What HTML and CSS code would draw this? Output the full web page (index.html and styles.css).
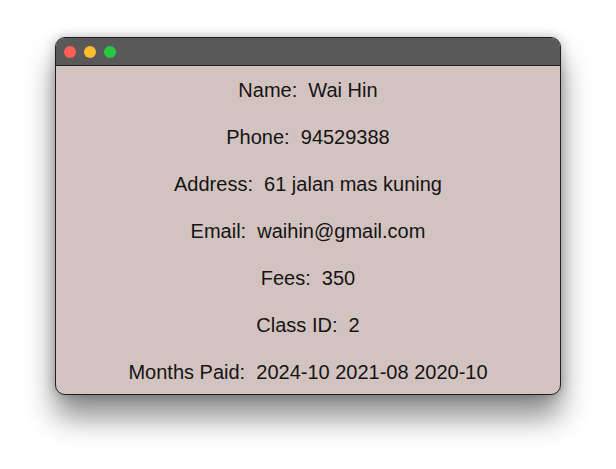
FILE: index.html
```html
<!DOCTYPE html>
<html>
<head>
<meta charset="utf-8">
<link rel="stylesheet" href="styles.css">
</head>
<body>
<div class="window">
  <div class="titlebar">
    <span class="light red"></span>
    <span class="light yellow"></span>
    <span class="light green"></span>
  </div>
  <div class="content">
    <div class="row">Name:  Wai Hin</div>
    <div class="row">Phone:  94529388</div>
    <div class="row">Address:  61 jalan mas kuning</div>
    <div class="row">Email:  waihin@gmail.com</div>
    <div class="row">Fees:  350</div>
    <div class="row">Class ID:  2</div>
    <div class="row">Months Paid:  2024-10 2021-08 2020-10</div>
  </div>
</div>
</body>
</html>
```
FILE: styles.css
```css
html, body {
  margin: 0;
  padding: 0;
  background: #ffffff;
}
body {
  width: 616px;
  height: 469px;
  overflow: hidden;
  font-family: "Liberation Sans", Arial, sans-serif;
}
.window {
  margin: 37px 0 0 55px;
  width: 504px;
  height: 356px;
  border: 1px solid #1e1e1e;
  border-radius: 10px;
  overflow: hidden;
  background: #d3c3c0;
  box-shadow: 0 22px 30px rgba(0,0,0,0.45), 0 0 12px rgba(0,0,0,0.25);
  display: flex;
  flex-direction: column;
}
.titlebar {
  height: 27px;
  background: #595959;
  border-bottom: 1px solid #1e1e1e;
  display: flex;
  align-items: center;
  gap: 8px;
  padding-left: 8px;
  flex-shrink: 0;
}
.light {
  width: 12px;
  height: 12px;
  border-radius: 50%;
  display: block;
}
.red { background: #fe5f57; }
.yellow { background: #febc2e; }
.green { background: #28c840; }
.content {
  display: flex;
  flex-direction: column;
  padding-top: 1px;
}
.row {
  height: 47px;
  line-height: 47px;
  text-align: center;
  font-size: 20px;
  color: #141414;
  white-space: pre;
  flex-shrink: 0;
}
```
